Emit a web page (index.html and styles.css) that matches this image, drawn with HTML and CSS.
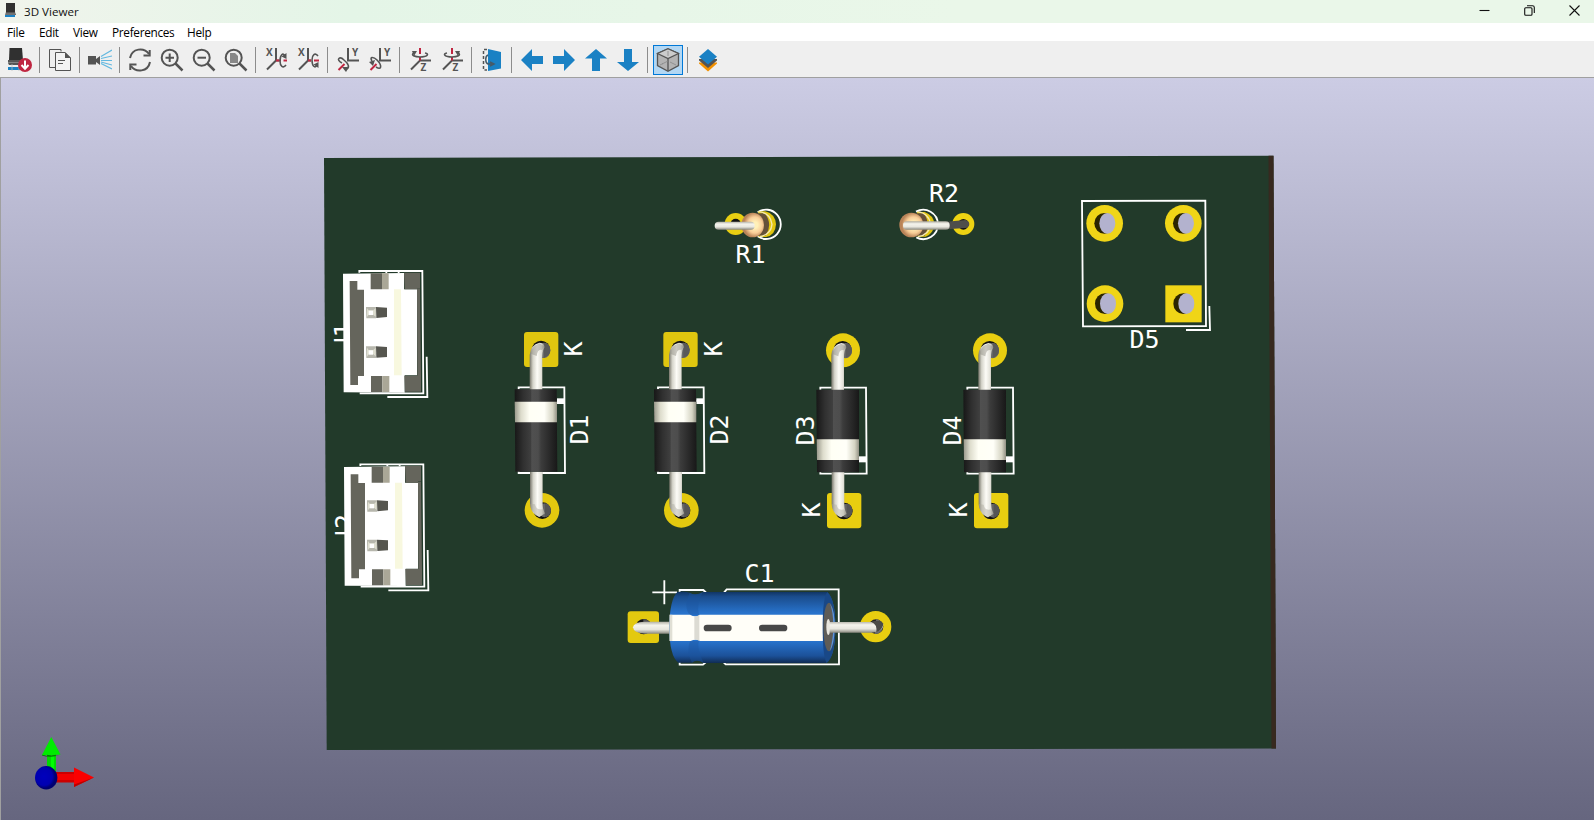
FILE: index.html
```html
<!DOCTYPE html>
<html lang="en">
<head>
<meta charset="utf-8">
<title>3D Viewer</title>
<link rel="stylesheet" href="styles.css">
</head>
<body>
<div class="window">
<header class="titlebar">
  <svg class="app-icon" width="12" height="15" viewBox="0 0 12 15"><path d="M1 0H10V9H1Z" fill="#303030"/><path d="M1 9H10L11 12H0Z" fill="#555"/><path d="M0 11H10" stroke="#bbb" stroke-width=".6"/><path d="M0 12H10V14H0Z" fill="#1a81c4"/></svg>
  <span class="title">3D Viewer</span>
  <div class="controls">
    <svg width="11" height="11" viewBox="0 0 11 11"><path d="M.5 5.5H10.5"/></svg>
    <svg width="11" height="11" viewBox="0 0 11 11"><rect x=".7" y="2.7" width="7.3" height="7.5" rx="1"/><path d="M3 .7H8.5Q10.3.7 10.3 2.5V8"/></svg>
    <svg width="11" height="11" viewBox="0 0 11 11"><path d="M.5.5L10.5 10.5M10.5.5L.5 10.5"/></svg>
  </div>
</header>
<nav class="menubar"><span class="m-file">File</span><span class="m-edit">Edit</span><span class="m-view">View</span><span class="m-pref">Preferences</span><span class="m-help">Help</span></nav>
<div class="toolbar">
  <span class="tool"><svg viewBox="0 0 24 24"><path d="M1.500 0H14L15 12H1Z" fill="#303030"/><path d="M0 12H16V15.500L15 17H1L0 15Z" fill="#555"/><path d="M0 14.500H16" stroke="#999" stroke-width=".7"/><path d="M0 19H12V22H0Z" fill="#1a81c4"/><path d="M4 16V23M11 16V23" stroke="#bbb" stroke-width=".7"/><circle cx="17" cy="17" r="7" fill="#bf2641"/><path d="M17 12.500V20M13.500 17L17 20.700L20.500 17" fill="none" stroke="#fff" stroke-width="2"/></svg></span>
  <i class="sep"></i>
  <span class="tool"><svg viewBox="0 0 24 24"><path d="M7 19.500H1.500V1.500H13V3.500" class="thin"/><path d="M7.500 4.500H17L22.500 10V22.500H7.500Z" fill="#f3f3f3" stroke="#545454"/><path d="M17 4V10H23Z" fill="#545454"/><path d="M10 12.500H17M10 15.500H15" class="thin"/></svg></span>
  <i class="sep"></i>
  <span class="tool"><svg viewBox="0 0 24 24"><path d="M0 8H8V11L12 8V17L8 14V16.500H0Z" fill="#545454"/><path d="M13 8.500L24 2M13 10.500L24 8M13 12.500H24M13 14L24 17M13 15.500L24 21" fill="none" stroke="#62b8e0" stroke-width="1.200"/></svg></span>
  <i class="sep"></i>
  <span class="tool"><svg viewBox="0 0 24 24"><path d="M2 10C4 0 16-1 21 6M22 14C20 24 8 25 3 18" class="line"/><path d="M21.700 2V7.500H15.500M2.300 22V16.500H8.500" class="line"/></svg></span>
  <span class="tool"><svg viewBox="0 0 24 24"><circle cx="9.700" cy="9.700" r="8" class="line"/><path d="M15.500 15.500L22.500 22.500" class="line wide"/><path d="M9.700 5.500V14M5.500 9.700H14" class="line"/></svg></span>
  <span class="tool"><svg viewBox="0 0 24 24"><circle cx="9.700" cy="9.700" r="8" class="line"/><path d="M15.500 15.500L22.500 22.500" class="line wide"/><path d="M5.500 9.700H14" class="line"/></svg></span>
  <span class="tool"><svg viewBox="0 0 24 24"><circle cx="9.700" cy="9.700" r="8" class="line"/><path d="M15.500 15.500L22.500 22.500" class="line wide"/><path d="M6 5H11L14 8V15H6Z" fill="#888"/></svg></span>
  <i class="sep"></i>
  <span class="tool"><svg viewBox="0 0 24 24"><text x="2" y="8" class="axis">X</text><path d="M12 0V12.500L3 21.500M12 12.500H15" class="line"/><path d="M12 12.500H17M19.500 12.500H23" class="red"/><path d="M22 17C19 21 16 18 16 13C16 7 19 4 21 8" class="line slim"/><path d="M17.500 8.500L22.500 5V11Z" fill="#545454"/></svg></span>
  <span class="tool"><svg viewBox="0 0 24 24"><text x="2" y="8" class="axis">X</text><path d="M12 0V12.500L3 21.500M12 12.500H15" class="line"/><path d="M12 12.500H15M18 12.500H23" class="red"/><path d="M22 8C19 4 16 7 16 12C16 18 19 21 21 17" class="line slim"/><path d="M17.500 16.500L22.500 14V20Z" fill="#545454"/></svg></span>
  <i class="sep"></i>
  <span class="tool"><svg viewBox="0 0 24 24"><text x="16" y="8" class="axis">Y</text><path d="M12 0V12.500H23" class="line"/><path d="M8.500 16L2.500 22" class="red"/><path d="M6 15C-1 11 4 8 8 12C13 16 14 20 10 21" class="line slim"/><path d="M6 19L13 19L10 24Z" fill="#545454"/></svg></span>
  <span class="tool"><svg viewBox="0 0 24 24"><text x="16" y="8" class="axis">Y</text><path d="M12 0V12.500H23" class="line"/><path d="M8.500 16L2.500 22" class="red"/><path d="M4 13C1 8 6 9 9 12C14 17 14 23 8 19" class="line slim"/><path d="M1 14L7 12L5 18Z" fill="#545454"/></svg></span>
  <i class="sep"></i>
  <span class="tool"><svg viewBox="0 0 24 24"><text x="12.500" y="23" class="axis">Z</text><path d="M23 12.500H12L3 21.500" class="line"/><path d="M12 0V6M12 9V12.500" class="red"/><path d="M6 5C2 7 7 9 12 9C19 9 22 6 17 5" class="line slim"/><path d="M4 3H9L6 8Z" fill="#545454"/></svg></span>
  <span class="tool"><svg viewBox="0 0 24 24"><text x="12.500" y="23" class="axis">Z</text><path d="M23 12.500H12L3 21.500" class="line"/><path d="M12 0V6M12 9V12.500" class="red"/><path d="M7 5C2 6 5 9 12 9C17 9 22 7 18 5" class="line slim"/><path d="M15 3H20L18 8Z" fill="#545454"/></svg></span>
  <i class="sep"></i>
  <span class="tool"><svg viewBox="0 0 24 24"><path d="M7 1.500H3.500V22H7" fill="none" stroke="#545454" stroke-width="1.500" stroke-dasharray="3 2"/><path d="M8 1L21 4V20.500L8 23Z" fill="#1a81c4"/><path d="M8 7C5 8 5 15 8 16H13M10 14L14 16L10 18" fill="none" stroke="#465b69" stroke-width="1.500"/></svg></span>
  <i class="sep"></i>
  <span class="tool"><svg viewBox="0 0 24 24"><path d="M1 12L12 1V8H23V16H12V23Z" fill="#1a81c4"/></svg></span>
  <span class="tool"><svg viewBox="0 0 24 24"><path d="M23 12L12 1V8H1V16H12V23Z" fill="#1a81c4"/></svg></span>
  <span class="tool"><svg viewBox="0 0 24 24"><path d="M12 1L1 10.500H8V23H16V10.500H23Z" fill="#1a81c4"/></svg></span>
  <span class="tool"><svg viewBox="0 0 24 24"><path d="M12 23L1 14H8V1H16V14H23Z" fill="#1a81c4"/></svg></span>
  <i class="sep"></i>
  <span class="tool active"><svg viewBox="0 0 24 24"><path d="M12 .8L22.500 5.500V17.500L12 23.200L1.500 17.500V5.500Z" fill="#b3b3b3" stroke="#545454" stroke-width="1.300"/><path d="M12 .8L22.500 5.500L12 10.500L1.500 5.500Z" fill="#ccc" stroke="#545454" stroke-width="1.200"/><path d="M12 10.500V23" stroke="#545454" stroke-width="1.300"/><path d="M12 3V8M12 13L6 16M4 17L7 15.500M14 14L20 17" stroke="#888" stroke-width=".8"/></svg></span>
  <i class="sep"></i>
  <span class="tool"><svg viewBox="0 0 24 24"><path d="M3 14.500H21V15.500L12 23.500L3 15.500Z" fill="#f29100"/><path d="M3 11H21V12.500L12 20L3 12.500Z" fill="#545454"/><path d="M12 1L21 8.700L12 16.500L3 8.700Z" fill="#1a81c4"/></svg></span>
</div>
<main class="viewport">
<svg class="scene" viewBox="0 78 1594 742">
  <defs>
    <linearGradient id="lead"><stop offset="0" stop-color="#77756a"/><stop offset=".22" stop-color="#d5d4ca"/><stop offset=".5" stop-color="#fdfcf7"/><stop offset=".78" stop-color="#e3e2d9"/><stop offset="1" stop-color="#85847a"/></linearGradient>
    <linearGradient id="leadH" x2="0" y2="1"><stop offset="0" stop-color="#b0aea4"/><stop offset=".3" stop-color="#f5f4ed"/><stop offset=".65" stop-color="#e8e7df"/><stop offset="1" stop-color="#8a8980"/></linearGradient>
    <linearGradient id="black"><stop offset="0" stop-color="#171717"/><stop offset=".2" stop-color="#303030"/><stop offset=".38" stop-color="#3f3f3f"/><stop offset=".4" stop-color="#505050"/><stop offset=".55" stop-color="#4d4d4d"/><stop offset=".62" stop-color="#3c3c3c"/><stop offset="1" stop-color="#181818"/></linearGradient>
    <linearGradient id="band"><stop offset="0" stop-color="#99988b"/><stop offset=".15" stop-color="#dddccc"/><stop offset=".35" stop-color="#fffff5"/><stop offset=".7" stop-color="#fffff8"/><stop offset=".9" stop-color="#d5d4c3"/><stop offset="1" stop-color="#929184"/></linearGradient>
    <linearGradient id="blue" x2="0" y2="1"><stop offset="0" stop-color="#103361"/><stop offset=".07" stop-color="#1a4c8c"/><stop offset=".3" stop-color="#2873cc"/><stop offset=".7" stop-color="#2772cb"/><stop offset=".9" stop-color="#1c5199"/><stop offset="1" stop-color="#102c54"/></linearGradient>
    <radialGradient id="tan" cx=".6"><stop offset=".25" stop-color="#fff0b8"/><stop offset=".65" stop-color="#f9ce98"/><stop offset="1" stop-color="#b98358"/></radialGradient>
    <radialGradient id="ball" cx=".4" cy=".45"><stop offset="0" stop-color="#0000bd"/><stop offset=".75" stop-color="#0000b0"/><stop offset="1" stop-color="#000070"/></radialGradient>
    <g id="bend-top">
      <ellipse cx="123" cy="88" rx="27" ry="26" fill="#111"/><ellipse cx="132" cy="91" rx="19" ry="23" fill="#6b6b6b"/><path d="M132 68V113Q151 108 151 90Q150 70 132 68" fill="#595959"/>
      <path d="M89 210V105Q91 74 119 68Q134 70 134 82Q128 90 127 108V210Z" fill="url(#lead)"/><path d="M92 101Q96 76 119 70L132 79L126 90Q113 85 110 108Z" fill="#96948a" opacity=".5"/>
    </g>
    <g id="bend-bottom">
      <ellipse cx="127" cy="572" rx="26" ry="25" fill="#111"/><ellipse cx="134" cy="571" rx="18" ry="21" fill="#666"/><path d="M135 551V592Q152 588 152 571Q151 554 135 551" fill="#555"/>
      <path d="M90 455H128V555Q129 570 135 580L118 591Q91 580 90 550Z" fill="url(#lead)"/><path d="M91 551Q94 582 118 591L134 581L128 567Q108 572 105 553Z" fill="#aaa89d" opacity=".45"/>
    </g>
    <g id="diode-up">
      <rect x="72" y="36" width="103" height="105" rx="9" fill="#e0c60f"/><circle cx="126" cy="571" r="52" fill="#e3c90f"/>
      <path d="M56 208V202H193L195 459H56V454M172 243H193" class="silk"/><path d="M171 235H193V252H171Z" fill="#fff"/>
      <use href="#bend-top"/><use href="#bend-bottom"/>
      <path d="M44 208H170L172 455H46Z" fill="url(#black)"/><path d="M44 245H171V307H45Z" fill="url(#band)"/>
    </g>
    <g id="diode-down">
      <circle cx="189" cy="91" r="51" fill="#e9ce10"/><rect x="141" y="519" width="103" height="106" rx="9" fill="#e8ce10"/>
      <path d="M121 209V203H258L260 461H121V455" class="silk"/><path d="M237 409H260V427H237Z" fill="#fff"/>
      <use href="#bend-top" x="65" y="1"/><use href="#bend-bottom" x="65" y="1"/>
      <path d="M109 209H237V457H111Z" fill="url(#black)"/><path d="M110 358H237V420H111Z" fill="url(#band)"/>
    </g>
    <g id="connector">
      <path d="M148 68V63H337L340 430H149M229 63V69M266 63V69M232 441H352L350 320" class="silk"/>
      <path d="M99 71L282 69V118H321V376H284V428L101 427Z" fill="#fff"/>
      <path d="M119 93H142V119H162V378H144V405H121Z" fill="#65655c"/>
      <path d="M182 70H216V118H182ZM183 378H217V426H183Z" fill="#65655c"/><path d="M216 70H236V118H216ZM217 378H238V426H217Z" fill="#aaa797"/>
      <path d="M282 68H330V114H321V118H284ZM283 377H333V425H285ZM321 115H330L333 377H322Z" fill="#65655c"/>
      <path d="M252 118H273L275 376H252Z" fill="#f8f8df"/>
      <path d="M168 171H198V205H169Z" fill="#b7b7ad"/><path d="M198 171L231 173V201L199 204Z" fill="#56564f"/><path d="M171 175L176 181H190L197 174V200L190 194H176L171 201Z" fill="#deded0"/><path d="M176 182H189V195H176Z" fill="#fff"/>
      <path d="M168 289H198V324H169Z" fill="#b7b7ad"/><path d="M198 289L231 291V321L199 323Z" fill="#56564f"/><path d="M171 293L176 300H190L197 293V319L190 313H176L171 320Z" fill="#deded0"/><path d="M176 301H189V314H176Z" fill="#fff"/>
    </g>
    <g id="hole"><ellipse cx="0" cy="0" rx="30" ry="31" fill="#2b2500"/><ellipse cx="9" cy="0" rx="24" ry="31" fill="#b3b2ce"/></g>
  </defs>

  <path d="M324 158L1273.500 155.700L1276 748.500L326.700 750Z" fill="#223a2a"/>
  <path d="M1268.500 155.700H1273.500L1276 748.500H1271.500Z" fill="#37291f"/>

  <!-- Connectors J1 and J2 -->
  <text transform="translate(352 343.500) rotate(-90)" class="label stem">J</text><text transform="translate(352 337.500) rotate(-90)" class="label">1</text>
  <text transform="translate(353 536.500) rotate(-90)" class="label stem">J</text><text transform="translate(353 529) rotate(-90)" class="label">2</text>
  <g transform="translate(310 250) scale(.33333)"><use href="#connector"/><use href="#connector" x="3" y="580"/></g>

  <!-- Diodes D1 to D4 -->
  <g transform="translate(500 320) scale(.33333)"><use href="#diode-up"/><use href="#diode-up" x="418"/></g>
  <g transform="translate(780 320) scale(.33333)"><use href="#diode-down"/><use href="#diode-down" x="441"/></g>
  <text transform="translate(588.200 444.500) rotate(-90)" class="label">D1</text>
  <text transform="translate(727.700 444.500) rotate(-90)" class="label">D2</text>
  <text transform="translate(813.500 445.500) rotate(-90)" class="label">D3</text>
  <text transform="translate(960.800 445.500) rotate(-90)" class="label">D4</text>
  <text transform="translate(582 356.500) rotate(-90)" class="label">K</text>
  <text transform="translate(721.500 356.500) rotate(-90)" class="label">K</text>
  <text transform="translate(819.500 517.500) rotate(-90)" class="label">K</text>
  <text transform="translate(966.500 517.500) rotate(-90)" class="label">K</text>

  <!-- Resistors -->
  <g transform="translate(700 170) scale(.33333)">
    <circle cx="107" cy="162" r="33" fill="#e9cf12"/><circle cx="107" cy="161" r="15" fill="#111"/>
    <path d="M173 127A44 44 0 1 1 173 199" class="silk"/><path d="M175 124H196Q226 132 228 163Q226 197 198 201H176Z" fill="#e0c50e"/><path d="M160 130H195Q219 164 197 197H160Z" fill="#655039"/><path d="M176 125Q211 128 216 163Q213 194 179 200" fill="none" stroke="#f5e9ad" stroke-width="4"/>
    <ellipse cx="158" cy="165" rx="34" ry="37" fill="url(#tan)"/><rect x="44" y="155" width="120" height="24" rx="12" fill="url(#leadH)"/>
    <circle cx="790" cy="162" r="33" fill="#edd313"/><circle cx="790" cy="163" r="16" fill="#111"/>
    <path d="M648 125A44 44 0 1 1 649 202" class="silk"/><path d="M651 126H674Q700 135 704 163Q700 192 677 200H653Z" fill="#e0c50e"/><path d="M635 130H672Q694 164 674 197H635Z" fill="#655039"/><path d="M652 125Q688 130 691 163Q688 195 654 200" fill="none" stroke="#f5e9ad" stroke-width="4"/>
    <ellipse cx="634" cy="165" rx="36" ry="37" fill="url(#tan)"/><path d="M740 155L796 150Q807 151 808 162Q807 173 796 174L740 178Z" fill="#4e4e4b"/><rect x="609" y="154" width="140" height="25" rx="12" fill="url(#leadH)"/>
  </g>
  <text x="735.500" y="263" class="label">R1</text><text x="929" y="201.500" class="label">R2</text>

  <!-- D5 footprint -->
  <g transform="translate(1060 140) scale(.33333)">
    <path d="M66 183L436 182L438 558L69 559ZM378 570H450L448 498" class="silk"/>
    <circle cx="134" cy="250" r="55" fill="#f0d517"/><circle cx="370" cy="250" r="55" fill="#f0d517"/><circle cx="135" cy="491" r="55" fill="#f0d517"/><rect x="316" y="436" width="109" height="111" fill="#f0d517"/>
    <use href="#hole" x="133" y="250"/><use href="#hole" x="369" y="250"/><use href="#hole" x="135" y="491"/><use href="#hole" x="370" y="491"/>
  </g>
  <text x="1129.500" y="348" class="label">D5</text>

  <!-- Capacitor C1 -->
  <g transform="translate(610 550) scale(.33333)">
    <rect x="53" y="184" width="94" height="95" rx="9" fill="#e3c90f"/><circle cx="797" cy="230" r="47" fill="#e9ce10"/>
    <path d="M163 91V163M127 127H201M209 126V120H280L289 129M342 128L350 118H686L687 343H347L341 337M209 337V344H279L288 336" class="silk"/>
    <circle cx="101" cy="230" r="23" fill="#171717"/><path d="M100 207A23 23 0 0 1 122 225H100Z" fill="#555"/><ellipse cx="798" cy="230" rx="22" ry="22" fill="#252525"/><path d="M798 208A22 22 0 0 1 795 252Z" fill="#6d6d6d"/>
    <path d="M179 215H103Q70 217 69 232Q70 249 105 251H179Z" fill="url(#leadH)"/>
    <path d="M202 126Q220 123 239 128Q256 138 279 126H652Q676 148 676 231Q676 318 650 339H281Q260 326 246 338H205Q178 318 178 231Q179 148 202 126Z" fill="url(#blue)"/>
    <path d="M239 128Q220 173 239 194H267Q258 160 279 126Q256 138 239 128ZM240 273Q228 306 246 338Q260 326 281 339Q258 290 268 273Z" fill="#1c559f" opacity=".4"/>
    <path d="M179 194H240Q257 203 269 194H639V273H270Q257 265 242 273H179Z" fill="#fffef8"/><path d="M253 199Q260 200 268 195V273Q260 268 253 268Z" fill="#c9c8be" opacity=".65"/><path d="M178 194H187V273H178Z" fill="#ccc9be" opacity=".6"/>
    <path d="M652 126Q676 148 676 231Q676 318 650 339Q638 320 638 231Q638 142 652 126Z" fill="#194887"/><ellipse cx="657" cy="231" rx="17" ry="73" fill="#5e5c57"/><path d="M659 158Q677 185 674 239Q672 285 659 304Q669 274 670 231Q670 182 659 158Z" fill="#5b94dc"/>
    <rect x="281" y="224" width="84" height="20" rx="10" fill="#484848"/><rect x="447" y="224" width="85" height="20" rx="10" fill="#484848"/>
    <ellipse cx="655" cy="231" rx="6" ry="24" fill="#e8e6df"/><path d="M659 216H784Q808 211 820 222Q819 247 782 248H659Z" fill="url(#leadH)"/><path d="M784 216Q812 206 820 221Q819 238 799 247Q802 222 784 216Z" fill="#4b4b47"/>
  </g>
  <text x="744.500" y="581.700" class="label">C1</text>

  <!-- Orientation gizmo -->
  <path d="M47 751H56V776H47Z" fill="#00db00"/><path d="M51 751H54V775H51Z" fill="#0f0"/><path d="M42 754.500Q51 757.500 60.500 754.500Q51 758.500 42 755.500Z" fill="#067506"/><path d="M51.300 737L60.500 754.500Q51 755.500 42 755Z" fill="#00eb00"/><path d="M47 755.300Q51 756.500 56 755.300" fill="none" stroke="#067506"/>
  <path d="M55 772H75V782.500H55Z" fill="#c00"/><path d="M55 774H75V780H55Z" fill="#f20000"/><path d="M74 767.500L94 777.500L74 787Z" fill="#fb0000"/><path d="M74 787L94 777.500L74 784.500Z" fill="#bb0000"/><ellipse cx="46.200" cy="777.700" rx="11.200" ry="11.700" fill="url(#ball)"/>
</svg>
</main>
</div>
</body>
</html>
```
FILE: styles.css
```css
* { box-sizing: border-box; }
body { margin: 0; font-family: "Open Sans", "Noto Sans", sans-serif; color: #111; }
.window { display: flex; flex-direction: column; width: 100vw; height: 100vh; overflow: hidden; }
.titlebar { display: flex; align-items: center; height: 23px; padding-left: 5px; background: linear-gradient(90deg, #f0f4ec, #e4f5e7 22%, #eaf7e9 60%, #eaf7e9); flex: none; }
.app-icon { margin-top: -3px; }
.title { margin-left: 7px; font-size: 11.6px; line-height: 23px; }
.controls { display: flex; gap: 34px; margin-left: auto; padding: 0 14px 3px 0; }
.controls svg { display: block; fill: none; stroke: #111; stroke-width: 1.1; }
.menubar { display: flex; height: 18px; padding-left: 7px; background: #fff; color: #000; font-size: 11.8px; letter-spacing: -.3px; line-height: 19px; flex: none; }
.m-file { width: 32px; }
.m-edit { width: 34px; }
.m-view { width: 39px; }
.m-pref { width: 75px; }
.toolbar { display: flex; height: 37px; padding: 3px 0 2px 4px; background: #efefef; border-bottom: 1px solid #a0a0a0; flex: none; }
.tool { display: flex; align-items: center; justify-content: center; width: 32px; height: 31px; }
.tool svg { display: block; width: 24px; height: 24px; }
.active { width: 30px; height: 30px; margin: 1px; background: #b3d7f3; border: 1px solid #0078d7; }
.sep { width: 8px; height: 26px; margin-top: 3px; flex: none; }
.sep::before { content: ""; display: block; width: 1px; height: 100%; margin-left: 3px; background: #8c8c8c; }
.line { fill: none; stroke: #545454; stroke-width: 2; }
.slim { stroke-width: 1.6; }
.wide { stroke-width: 2.5; }
.thin { fill: none; stroke: #545454; stroke-width: 1; }
.red { fill: none; stroke: #bf2641; stroke-width: 2; }
.axis { font: bold 10px "Open Sans", sans-serif; fill: #545454; }
.viewport { flex: 1; min-height: 0; background: linear-gradient(#cccce4, #66667f); border-left: 1px solid #a0a0a0; }
.scene { display: block; width: 1594px; height: 742px; margin-left: -1px; }
.silk { fill: none; stroke: #fff; stroke-width: 5.5; }
.label { font: 25px "DejaVu Sans Mono", monospace; fill: #fff; }
.stem { font-family: "Noto Sans", sans-serif; }
```
